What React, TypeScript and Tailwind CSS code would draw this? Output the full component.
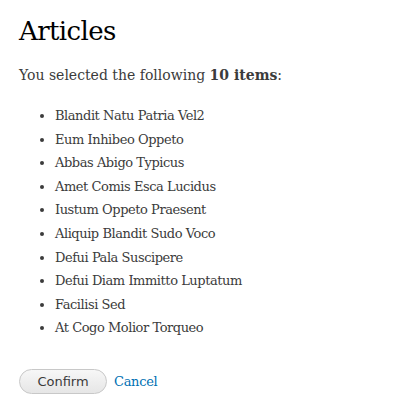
import React from "react";

const items = [
  "Blandit Natu Patria Vel2",
  "Eum Inhibeo Oppeto",
  "Abbas Abigo Typicus",
  "Amet Comis Esca Lucidus",
  "Iustum Oppeto Praesent",
  "Aliquip Blandit Sudo Voco",
  "Defui Pala Suscipere",
  "Defui Diam Immitto Luptatum",
  "Facilisi Sed",
  "At Cogo Molior Torqueo",
];

export default function App() {
  return (
    <div
      className="w-[417px] h-[413px] bg-white text-[#3b3b3b] px-[19px] pt-[14px]"
      style={{ fontFamily: '"DejaVu Serif", Georgia, serif' }}
    >
      <h1 className="text-[26px] leading-[34px] text-black tracking-[-0.6px]">Articles</h1>
      <p className="text-[14px] leading-[20px] mt-[17px]">
        You selected the following <strong className="font-bold">10 items</strong>:
      </p>
      <ul className="list-disc pl-[36px] mt-[19px] text-[13px] leading-[23.6px] tracking-[-0.45px]">
        {items.map((t) => (
          <li key={t}>{t}</li>
        ))}
      </ul>
      <div className="flex items-center gap-[7px] mt-[29px]">
        <button
          className="h-[25px] w-[88px] rounded-full border border-[#c8c8c8] bg-gradient-to-b from-[#f7f7f7] to-[#e6e6e6] text-[13px] text-[#3a3a3a]"
          style={{ fontFamily: '"DejaVu Sans", sans-serif' }}
        >
          Confirm
        </button>
        <a className="text-[13px] text-[#0071b3] tracking-[-0.3px]">Cancel</a>
      </div>
    </div>
  );
}
